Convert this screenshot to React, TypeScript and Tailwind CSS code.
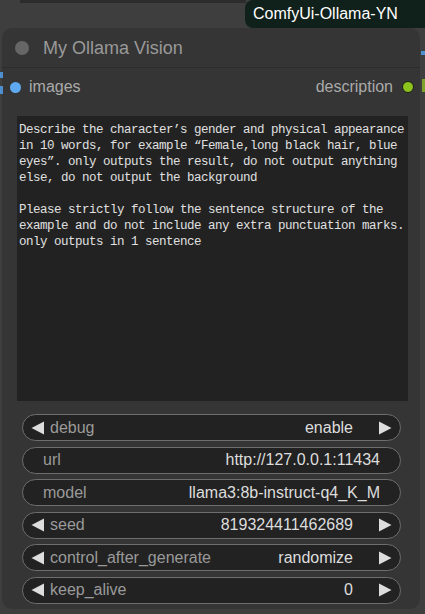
import React from "react";

const sans = { fontFamily: '"Liberation Sans", Arial, sans-serif' };

function LeftTri() {
  return (
    <svg width="14" height="14" viewBox="0 0 14 14" className="shrink-0">
      <polygon points="13,0.5 13,13.5 0.5,7" fill="#dddddd" />
    </svg>
  );
}
function RightTri() {
  return (
    <svg width="14" height="14" viewBox="0 0 14 14" className="shrink-0">
      <polygon points="1,0.5 1,13.5 13.5,7" fill="#dddddd" />
    </svg>
  );
}

function Widget({ label, value, arrows }: { label: string; value: string; arrows: boolean }) {
  return (
    <div className="h-[27px] w-[379px] ml-[20px] rounded-full border border-[#6e6e6e] bg-[#222222] flex items-center text-[16px]">
      {arrows ? (
        <>
          <div className="ml-[8px]"><LeftTri /></div>
          <span className="ml-[5px] text-[#9a9a9a]">{label}</span>
          <span className="ml-auto text-[#dddddd]">{value}</span>
          <div className="ml-[25px] mr-[8px]"><RightTri /></div>
        </>
      ) : (
        <>
          <span className="ml-[20px] text-[#9a9a9a]">{label}</span>
          <span className="ml-auto mr-[20px] text-[#dddddd]">{value}</span>
        </>
      )}
    </div>
  );
}

const lines = [
  "Describe the character’s gender and physical appearance",
  "in 10 words, for example “Female,long black hair, blue",
  "eyes”. only outputs the result, do not output anything",
  "else, do not output the background",
  "",
  "Please strictly follow the sentence structure of the",
  "example and do not include any extra punctuation marks.",
  "only outputs in 1 sentence",
];

export default function App() {
  return (
    <div className="relative w-[425px] h-[614px] overflow-hidden bg-[#3e3e3e]" style={sans}>
      {/* previous node bottom edge */}
      <div className="absolute top-0 left-[20px] w-[226px] h-[3px] bg-[#2c2c2c]" />
      {/* link stubs */}
      <div className="absolute left-0 top-[72px] w-[3px] h-[6px] bg-[#4e8fd0]" />
      <div className="absolute left-0 top-[86px] w-[3px] h-[8px] bg-[#4e8fd0]" />
      <div className="absolute right-0 top-[51px] w-[4px] h-[4px] bg-[#4e8fd0]" />
      <div className="absolute right-0 top-[79px] w-[3px] h-[13px] bg-[#7ea32a]" />

      {/* badge */}
      <div className="absolute top-0 left-[245px] w-[190px] h-[28px] rounded-[8px] bg-[#10201a] flex items-center pl-[8px] text-[16px] text-white">
        ComfyUi-Ollama-YN
      </div>

      {/* node */}
      <div className="mt-[28px] ml-[2px] w-[418px] h-[581px] rounded-[10px] bg-[#353535] flex flex-col">
        <div className="h-[40px] flex items-center border-b border-[#2c2c2c]">
          <div className="ml-[13px] w-[14px] h-[14px] rounded-full bg-[#666666]" />
          <span className="ml-[14px] text-[18px] text-[#999999] mt-[1px]">My Ollama Vision</span>
        </div>
        <div className="h-[38px] flex items-center text-[16px] text-[#aaaaaa]">
          <div className="ml-[8px] w-[11px] h-[11px] rounded-full bg-[#5ea9ef]" />
          <span className="ml-[8px]">images</span>
          <span className="ml-auto">description</span>
          <div className="ml-[9px] mr-[6px] w-[12px] h-[12px] rounded-full bg-[#8cc31c] border border-[#1a1a1a]" />
        </div>
        <div
          className="mt-[10px] ml-[15px] w-[391px] h-[285px] bg-[#222222] text-[#e0e0e0] pl-[2px] pt-[6px] text-[12.5px] leading-[16px] tracking-[-0.5px] whitespace-pre"
          style={{ fontFamily: '"Liberation Mono", "DejaVu Sans Mono", monospace' }}
        >
          {lines.map((l, i) => (
            <div key={i} className="h-[16px]">{l}</div>
          ))}
        </div>
        <div className="mt-[13px] flex flex-col gap-[5.5px]">
          <Widget label="debug" value="enable" arrows />
          <Widget label="url" value="http://127.0.0.1:11434" arrows={false} />
          <Widget label="model" value="llama3:8b-instruct-q4_K_M" arrows={false} />
          <Widget label="seed" value="819324411462689" arrows />
          <Widget label="control_after_generate" value="randomize" arrows />
          <Widget label="keep_alive" value="0" arrows />
        </div>
      </div>
    </div>
  );
}
